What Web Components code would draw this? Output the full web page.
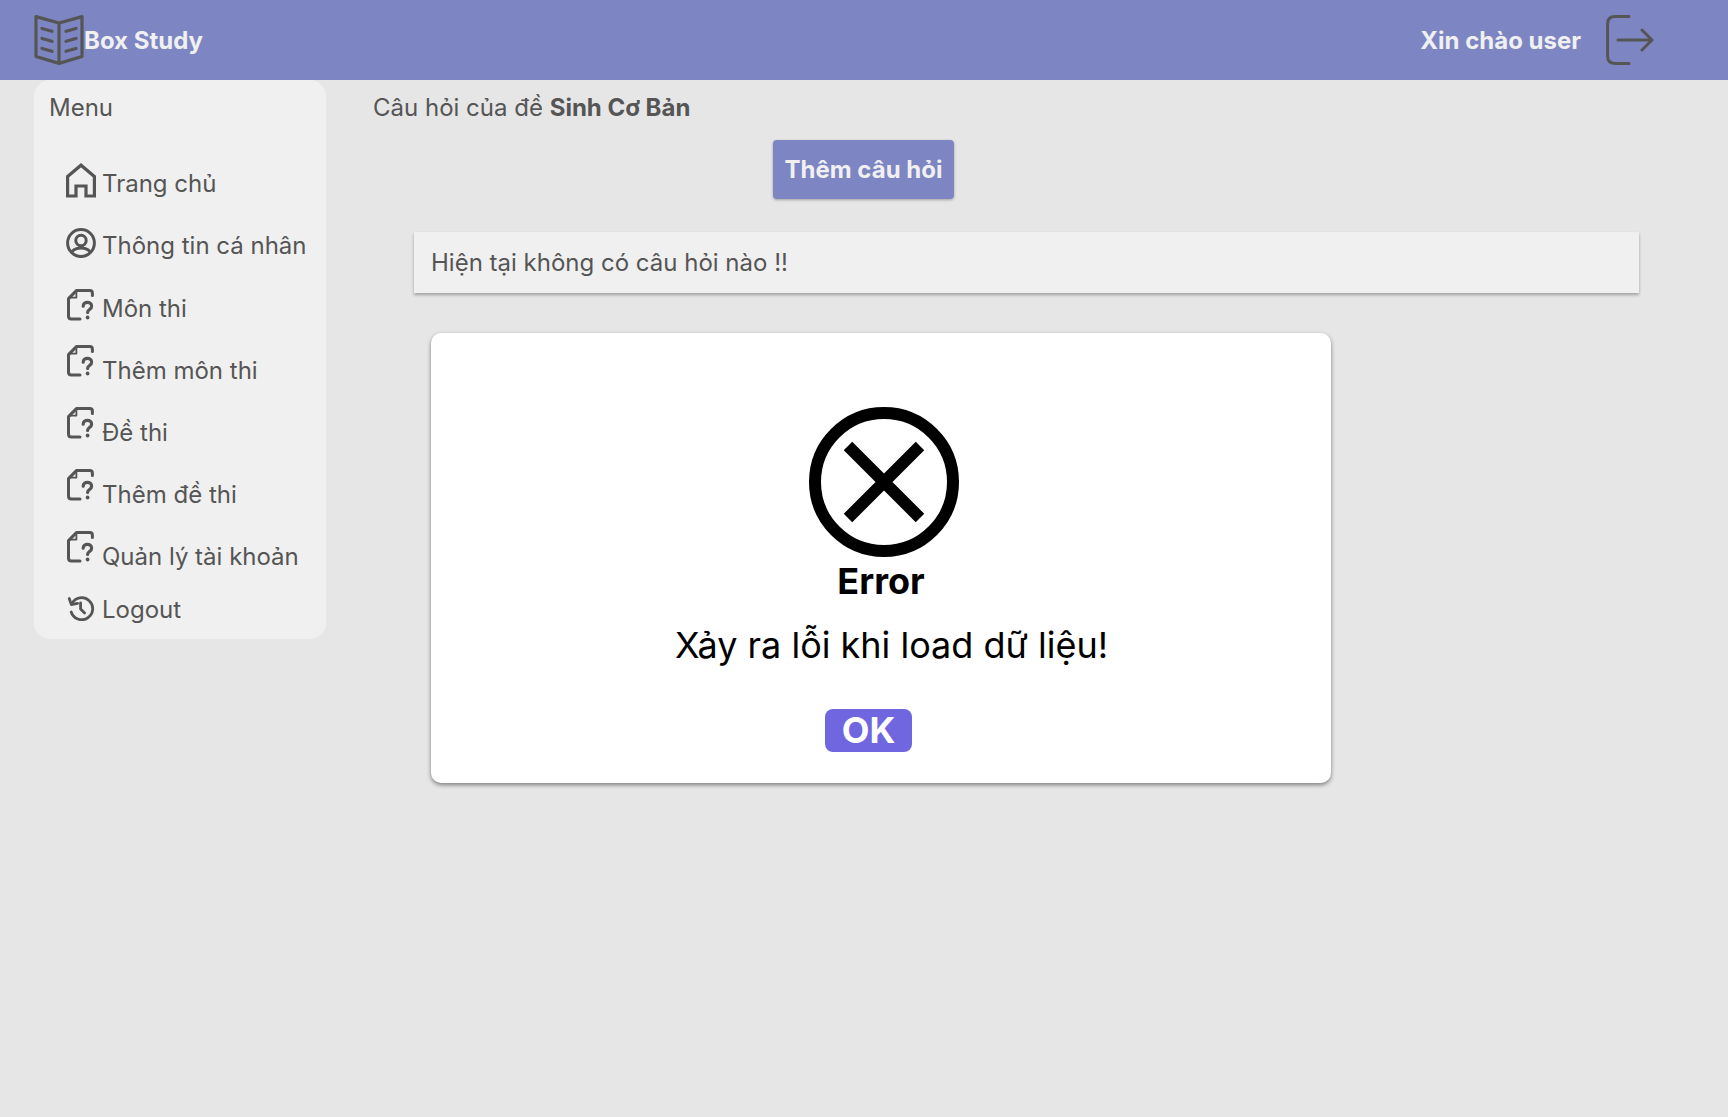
<!DOCTYPE html>
<html lang="vi">
<head>
<meta charset="utf-8">
<title>Box Study</title>
<style>
    html, body { margin: 0; height: 100%; }
    body {
        background: #e6e6e6;
        color: #555;
        font-family: Inter, "Noto Sans", sans-serif;
        font-size: 24px;
    }
</style>
</head>
<body>
<study-app>
    <app-header slot="header" greeting="Xin chào user">Box Study</app-header>
    <side-menu slot="menu" title-text="Menu">
        <menu-item icon="home" lift="8" raise>Trang chủ</menu-item>
        <menu-item icon="user" lift="7" raise>Thông tin cá nhân</menu-item>
        <menu-item icon="file" lift="7">Môn thi</menu-item>
        <menu-item icon="file" lift="19">Thêm môn thi</menu-item>
        <menu-item icon="file" lift="19">Đề thi</menu-item>
        <menu-item icon="file" lift="19">Thêm đề thi</menu-item>
        <menu-item icon="file" lift="19">Quản lý tài khoản</menu-item>
        <menu-item icon="history" lift="2" short>Logout</menu-item>
    </side-menu>
    <question-page>
        <span slot="title">Câu hỏi của đề <b>Sinh Cơ Bản</b></span>
        <span slot="action">Thêm câu hỏi</span>
        <span slot="notice">Hiện tại không có câu hỏi nào !!</span>
    </question-page>
    <error-dialog slot="overlay" heading="Error" confirm="OK">Xảy ra lỗi khi load dữ liệu!</error-dialog>
</study-app>

<script>
    /**
     * Base class: writes styles() and template() into an open shadow root
     */
    class BaseElement extends HTMLElement {
        constructor() {
            super();
            this.attachShadow({ mode: 'open' });
        }

        connectedCallback() {
            this.shadowRoot.innerHTML = `<style>${this.styles()}</style>${this.template()}`;
        }

        styles() { return ''; }
        template() { return ''; }
    }

    const ICONS = {
        home: `<svg width="30" height="35" viewBox="0 0 30 35" fill="none" stroke="#555" stroke-width="3.2">
            <path d="M1.6 33V13.5L15 2.2L28.4 13.5V33H20V23H10V33Z"/></svg>`,
        user: `<svg width="30" height="30" viewBox="0 0 30 30" fill="none" stroke="#555" stroke-width="3">
            <circle cx="15" cy="15" r="13.4"/><circle cx="15" cy="12.5" r="5.2"/>
            <path d="M6 23.5C8.5 20.8 11.5 20 15 20S21.5 20.8 24 23.5"/></svg>`,
        file: `<svg width="30" height="32" viewBox="-1 0 30 32" fill="none" stroke="#555" stroke-width="3" stroke-linecap="round" stroke-linejoin="round">
            <path d="M25.4 6.5V4.2Q25.4 1.6 22.8 1.6H9.4L1.5 9.6V27Q1.5 30 4.4 30H13"/>
            <path d="M9.4 2.5V8.6H3" stroke-width="1.8"/>
            <path d="M16.2 17.2C16.2 12 24.6 12 24.6 17.2C24.6 20.6 20.6 20.4 20.6 23.4" stroke-width="3.2"/>
            <path d="M20.6 28.4V28.6" stroke-width="3.8"/></svg>`,
        history: `<svg width="30" height="25" viewBox="-2 0 30 25" fill="none" stroke="#555" stroke-width="2.8" stroke-linecap="round" stroke-linejoin="round">
            <path d="M4 7.5A11 11 0 1 1 3.2 16"/><path d="M1.2 2.5L3.4 8.6L9.6 7.4"/>
            <path d="M12.6 7V13L16.6 17"/></svg>`
    };

    class StudyApp extends BaseElement {
        styles() {
            return `
                :host { display: flex; flex-direction: column; position: relative; min-height: 100vh; }
                .body { display: flex; align-items: flex-start; padding-left: 34px; }
            `;
        }
        template() {
            return `
                <slot name="header"></slot>
                <div class="body"><slot name="menu"></slot><slot></slot></div>
                <slot name="overlay"></slot>
            `;
        }
    }

    class AppHeader extends BaseElement {
        styles() {
            return `
                :host {
                    display: flex; align-items: center; justify-content: space-between;
                    height: 80px; padding: 0 74px 0 34px;
                    background: #7d86c3; color: #f0f0f0; font-weight: 700;
                }
                .side { display: flex; align-items: center; }
                .label { padding-top: 1px; }
                .user { gap: 25px; }
                svg { display: block; }
            `;
        }
        template() {
            return `
                <div class="side brand">
                    <svg width="50" height="50" viewBox="0 0 50 50" fill="none" stroke="#555" stroke-width="3.2" stroke-linecap="round" stroke-linejoin="round">
                        <path d="M25 8L2 1.6V41.5L25 48.4L48 41.5V1.6ZM25 8V48.4"/>
                        <path d="M8 13.5L18 16.3M8 23.5L18 26.3M8 33.5L18 36.3M32 16.3L42 13.5M32 26.3L42 23.5M32 36.3L42 33.5"/>
                    </svg>
                    <span class="label"><slot></slot></span>
                </div>
                <div class="side user">
                    <span class="label">${this.getAttribute('greeting')}</span>
                    <svg width="48" height="50" viewBox="0 0 48 50" fill="none" stroke="#555" stroke-width="3" stroke-linecap="round" stroke-linejoin="round">
                        <path d="M23 1.6H9Q1.6 1.6 1.6 9V41Q1.6 48.4 9 48.4H23"/>
                        <path d="M12 25H46M36 15L46 25L36 35"/>
                    </svg>
                </div>
            `;
        }
    }

    class SideMenu extends BaseElement {
        styles() {
            return `
                :host {
                    display: block; box-sizing: border-box; flex: none;
                    width: 292px; height: 559px; padding: 13px 0 8px 15px;
                    background: #f0f0f0; border-radius: 16px;
                }
                .title { line-height: 29px; margin-bottom: 31px; }
                .items { display: flex; flex-direction: column; padding-left: 17px; }
            `;
        }
        template() {
            return `
                <div class="title">${this.getAttribute('title-text')}</div>
                <div class="items"><slot></slot></div>
            `;
        }
    }

    class MenuItem extends BaseElement {
        styles() {
            const lift = this.getAttribute('lift') || 0;
            const height = this.hasAttribute('short') ? 44 : 62;
            const raise = this.hasAttribute('raise') ? 2 : 0;
            return `
                :host { display: flex; align-items: center; gap: 6px; height: ${height}px; white-space: nowrap; }
                svg { display: block; flex: none; margin-bottom: ${lift}px; }
                span { padding-bottom: ${raise}px; }
            `;
        }
        template() {
            return `${ICONS[this.getAttribute('icon')]}<span><slot></slot></span>`;
        }
    }

    class QuestionPage extends BaseElement {
        styles() {
            return `
                :host { display: block; flex: 1; padding: 13px 89px 0 47px; }
                .title { line-height: 29px; }
                .action {
                    display: inline-block; margin: 18px 0 0 400px; padding: 0 11.5px;
                    height: 59px; line-height: 59px; box-sizing: border-box;
                    background: #7d86c3; color: #f0f0f0; font-weight: 700;
                    border-radius: 4px; box-shadow: 0 1px 3px rgba(0, 0, 0, .3);
                }
                .notice {
                    margin: 33px 0 0 41px; padding: 0 17px; height: 61px; line-height: 62px;
                    background: #f0f0f0; box-shadow: 0 2px 3px rgba(0, 0, 0, .3);
                }
            `;
        }
        template() {
            return `
                <div class="title"><slot name="title"></slot></div>
                <div class="action"><slot name="action"></slot></div>
                <div class="notice"><slot name="notice"></slot></div>
            `;
        }
    }

    class ErrorDialog extends BaseElement {
        styles() {
            return `
                :host {
                    position: absolute; left: 431px; top: 333px;
                    display: flex; flex-direction: column; align-items: center;
                    box-sizing: border-box; width: 900px; height: 450px; padding-top: 74px;
                    background: #fff; color: #000; border-radius: 10px;
                    box-shadow: 0 2px 4px rgba(0, 0, 0, .45);
                    font-size: 36px;
                }
                svg { display: block; flex: none; margin-left: 5px; }
                .heading { font-weight: 700; line-height: 44px; margin-top: 2px; }
                .message { line-height: 44px; margin: 20px 0 0 21px; white-space: nowrap; }
                button {
                    margin: 42px 25px 0 0; padding: 0; width: 87px; height: 43px;
                    font: 700 36px/43px Inter, sans-serif; color: #fff;
                    background: #7066e0; border: 0; border-radius: 8px;
                }
            `;
        }
        template() {
            return `
                <svg width="150" height="150" viewBox="0 0 150 150" fill="none" stroke="#000" stroke-width="12">
                    <circle cx="75" cy="75" r="69"/>
                    <path d="M39 39L111 111M111 39L39 111"/>
                </svg>
                <div class="heading">${this.getAttribute('heading')}</div>
                <div class="message"><slot></slot></div>
                <button type="button">${this.getAttribute('confirm')}</button>
            `;
        }
    }

    customElements.define('study-app', StudyApp);
    customElements.define('app-header', AppHeader);
    customElements.define('side-menu', SideMenu);
    customElements.define('menu-item', MenuItem);
    customElements.define('question-page', QuestionPage);
    customElements.define('error-dialog', ErrorDialog);
</script>
</body>
</html>
